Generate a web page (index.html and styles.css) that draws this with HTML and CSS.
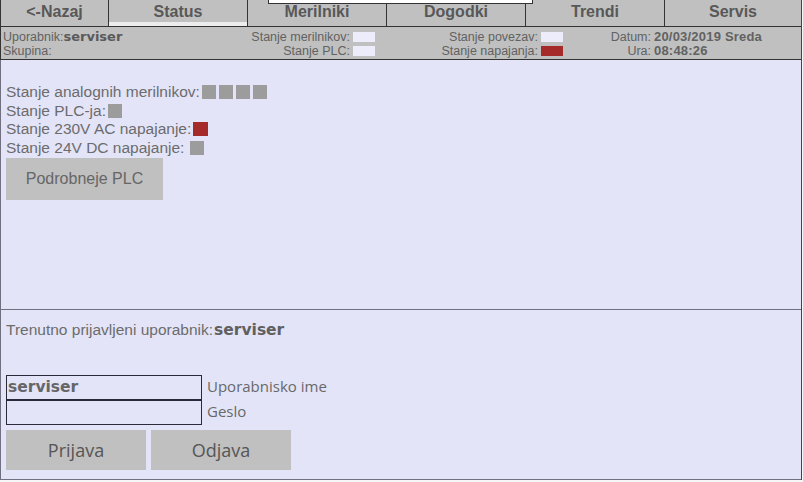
FILE: index.html
```html
<!DOCTYPE html>
<html>
<head>
    <title>Status</title>
    <link rel="stylesheet" href="styles.css">
</head>
<body>
    <div class="popup"></div>
    <div class="screen">
        <div class="tabs">
            <div class="tab back">&lt;-Nazaj</div>
            <div class="tab active">Status</div>
            <div class="tab">Merilniki</div>
            <div class="tab">Dogodki</div>
            <div class="tab">Trendi</div>
            <div class="tab last">Servis</div>
        </div>

        <div class="info">
            <div class="user">Uporabnik:<b>serviser</b></div>
            <div class="stat">Stanje merilnikov:<span class="led"></span></div>
            <div class="stat">Stanje povezav:<span class="led"></span></div>
            <div class="lbl">Datum:</div>
            <div class="val">20/03/2019 Sreda</div>
            <div class="user">Skupina:</div>
            <div class="stat">Stanje PLC:<span class="led"></span></div>
            <div class="stat">Stanje napajanja:<span class="led red"></span></div>
            <div class="lbl">Ura:</div>
            <div class="val">08:48:26</div>
        </div>

        <div class="panel status-panel">
            <div class="row">Stanje analognih merilnikov:<span class="sq first"></span><span class="sq"></span><span class="sq"></span><span class="sq"></span></div>
            <div class="row">Stanje PLC-ja:<span class="sq first"></span></div>
            <div class="row">Stanje 230V AC napajanje:<span class="sq first red"></span></div>
            <div class="row">Stanje 24V DC napajanje:<span class="sq first gap"></span></div>
            <button class="btn plc">Podrobneje PLC</button>
        </div>

        <div class="panel login-panel">
            <div class="row">Trenutno prijavljeni uporabnik:<b class="bold">serviser</b></div>
            <div class="login">
                <input type="text" class="field user-field" value="serviser">
                <label>Uporabnisko ime</label>
                <input type="password" class="field">
                <label>Geslo</label>
            </div>
            <div class="buttons">
                <button class="btn big">Prijava</button>
                <button class="btn big">Odjava</button>
            </div>
        </div>
    </div>
</body>
</html>
```

FILE: styles.css
```css
body {
    margin: 0;
    background: #f6f6f8;
    font-family: "Liberation Sans", Arial, sans-serif;
    color: #666;
}
.screen {
    width: 802px;
    box-sizing: border-box;
    border-right: 1px solid #444;
}
.popup {
    position: absolute;
    left: 268px;
    top: -12px;
    width: 263px;
    height: 14px;
    background: #fff;
    border: 1px solid #333;
    z-index: 2;
}
.tabs {
    display: flex;
    height: 26px;
    background: #c0c0c0;
    border-left: 1px solid #333;
    border-bottom: 1px solid #333;
}
.tab {
    width: 138px;
    border-right: 1px solid #333;
    text-align: center;
    font-weight: bold;
    font-size: 16px;
    line-height: 24px;
    color: #585858;
}
.tab.back {
    width: 107px;
}
.tab.last {
    flex: 1;
    border-right: none;
}
.tab.active {
    box-shadow: inset 0 -4px #ececec, inset 2px 0 #c0c0c0;
}
.info {
    display: grid;
    grid-template-columns: 239px 134px 188px 88px 1fr;
    grid-template-rows: 14px 14px;
    padding: 3px 0 1px 1px;
    background: #c0c0c0;
    border-left: 1px solid #333;
    border-bottom: 1px solid #333;
    font-size: 12.5px;
    line-height: 14px;
    color: #626262;
}
.info .user {
    padding-left: 1px;
}
.info .user b {
    font-family: "DejaVu Sans", sans-serif;
    font-size: 13px;
    color: #5a5a5a;
}
.stat {
    display: flex;
    justify-content: flex-end;
    align-items: center;
    gap: 3px;
}
.led {
    display: inline-block;
    width: 22px;
    height: 10px;
    background: #ececfb;
}
.led.red {
    background: #a52a2a;
}
.lbl {
    text-align: right;
}
.val {
    padding-left: 3px;
    font-weight: bold;
    font-size: 13px;
    letter-spacing: 0.2px;
}
.panel {
    background: #e3e4f8;
    border-left: 1px solid #707080;
    border-bottom: 1px solid #707080;
    padding: 0 5px;
}
.status-panel {
    height: 250px;
    box-sizing: border-box;
    padding-top: 23px;
}
.row {
    display: flex;
    align-items: center;
    font-size: 15.5px;
    line-height: 18.5px;
    color: #6c6c6c;
}
.sq {
    display: inline-block;
    width: 14px;
    height: 14px;
    margin-left: 3px;
    background: #9c9c9c;
}
.sq.first {
    margin-left: 2px;
}
.sq.gap {
    margin-left: 6px;
}
.sq.red {
    background: #a52a2a;
    width: 15px;
}
.btn {
    border: none;
    background: #c0c0c0;
    color: #666;
    padding: 0;
}
.btn.plc {
    display: block;
    width: 157px;
    height: 42px;
    margin-top: 1px;
    font-family: "Liberation Sans", Arial, sans-serif;
    font-size: 16px;
}
.login-panel {
    height: 170px;
    box-sizing: border-box;
    padding-top: 11px;
}
.bold {
    font-family: "DejaVu Sans", sans-serif;
    font-size: 15.5px;
    margin-left: 1px;
    color: #606060;
}
.login {
    display: grid;
    grid-template-columns: 196px 1fr;
    grid-template-rows: 25px 25px;
    column-gap: 5px;
    margin-top: 35px;
    font-family: "Open Sans", sans-serif;
    font-size: 15px;
    color: #686868;
}
.login label {
    line-height: 22px;
}
.field {
    width: 196px;
    height: 25px;
    box-sizing: border-box;
    margin: 0;
    border: 1px solid #2a2a3a;
    background: transparent;
    padding: 0 1px;
    font-family: "DejaVu Sans", sans-serif;
    font-weight: bold;
    font-size: 15.5px;
    color: #666;
    outline: none;
}
.buttons {
    display: flex;
    gap: 5px;
    margin-top: 5px;
}
.btn.big {
    width: 140px;
    height: 40px;
    font-family: "Open Sans", sans-serif;
    font-size: 18px;
    color: #555;
}
```
